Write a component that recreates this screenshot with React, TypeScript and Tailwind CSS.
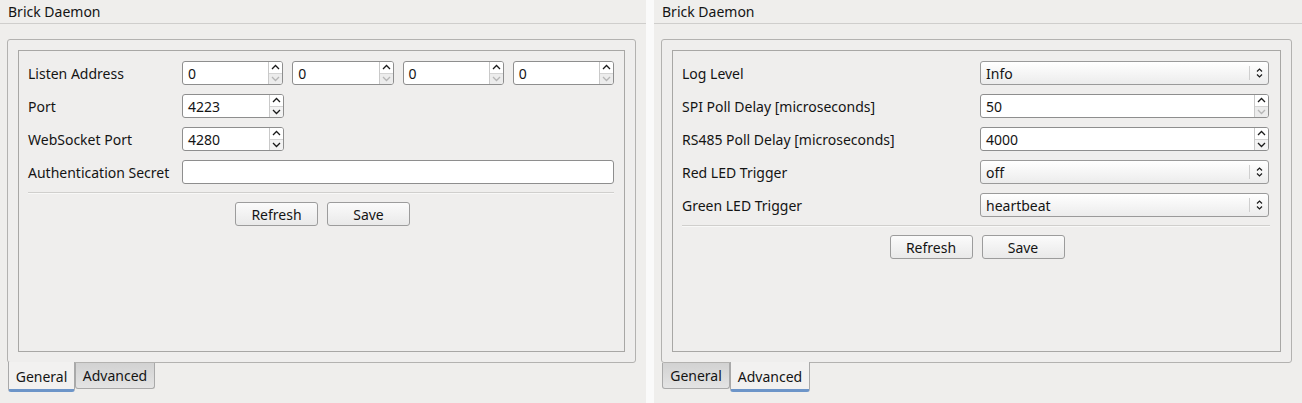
import React from "react";

const Up = ({ dim }: { dim?: boolean }) => (
  <svg width="9" height="6" viewBox="0 0 9 6">
    <path d="M1 5 L4.5 1.5 L8 5" fill="none" stroke={dim ? "#b5b5b5" : "#1a1a1a"} strokeWidth="1.3" />
  </svg>
);

const Down = ({ dim }: { dim?: boolean }) => (
  <svg width="9" height="6" viewBox="0 0 9 6">
    <path d="M1 1 L4.5 4.5 L8 1" fill="none" stroke={dim ? "#b5b5b5" : "#1a1a1a"} strokeWidth="1.3" />
  </svg>
);

function SpinBox({ value, dim, className }: { value: string; dim?: boolean; className: string }) {
  return (
    <div className={"flex h-[24px] rounded-[3px] border border-[#8e8e8e] bg-white overflow-hidden " + className}>
      <div className="flex-1 flex items-center pl-[5px] pt-[2px]">{value}</div>
      <div className="w-[14px] flex flex-col border-l border-[#c9c9c9]">
        <div className="flex-1 flex items-center justify-center border-b border-[#d4d4d4] bg-white">
          <Up />
        </div>
        <div className={"flex-1 flex items-center justify-center " + (dim ? "bg-[#ececec]" : "bg-[#f3f3f3]")}>
          <Down dim={dim} />
        </div>
      </div>
    </div>
  );
}

function Combo({ value }: { value: string }) {
  return (
    <div className="flex h-[24px] w-[289px] rounded-[3px] border border-[#9a9a9a] bg-gradient-to-b from-white to-[#ececec]">
      <div className="flex-1 flex items-center pl-[5px] pt-[2px]">{value}</div>
      <div className="w-[19px] my-[4px] border-l border-[#cfcfcf] flex flex-col items-center justify-center gap-[2px]">
        <svg width="7" height="12" viewBox="0 0 7 12">
          <path d="M1 4.5 L3.5 2 L6 4.5 M1 7.5 L3.5 10 L6 7.5" fill="none" stroke="#1a1a1a" strokeWidth="1.2" />
        </svg>
      </div>
    </div>
  );
}

function Button({ label }: { label: string }) {
  return (
    <div className="flex h-[24px] w-[83px] items-center justify-center pt-[2px] rounded-[3px] border border-[#9c9c9c] bg-gradient-to-b from-[#fbfbfb] to-[#e9e9e9]">
      {label}
    </div>
  );
}

function Row({ label, labelW, children }: { label: string; labelW: string; children: React.ReactNode }) {
  return (
    <div className="flex h-[24px] items-center">
      <div className={"pt-[2px] " + labelW}>{label}</div>
      {children}
    </div>
  );
}

function Tabs({ active }: { active: number }) {
  const names = ["General", "Advanced"];
  return (
    <div className="flex ml-[1px] -mt-[1px] items-start">
      {names.map((n, i) =>
        i === active ? (
          <div
            key={n}
            className={
              "h-[30px] flex items-center justify-center pt-[2px] border-x border-[#a9a9a9] border-b-[3px] border-b-[#6d95c8] rounded-b-[3px] bg-[#f2f1f0] " +
              (i === 0 ? "w-[67px]" : "w-[80px]")
            }
          >
            {n}
          </div>
        ) : (
          <div
            key={n}
            className={
              "h-[26px] mt-[1px] flex items-center justify-center pt-[1px] border border-t-0 border-[#a9a9a9] rounded-b-[3px] bg-gradient-to-b from-[#d2d2d2] to-[#e4e4e4] " +
              (i === 0 ? "w-[68px]" : "w-[80px]")
            }
          >
            {n}
          </div>
        )
      )}
    </div>
  );
}

function Panel({ width, active, children }: { width: string; active: number; children: React.ReactNode }) {
  return (
    <div className={"h-[403px] bg-[#efeeec] flex flex-col " + width}>
      <div className="h-[24px] flex items-center border-b border-[#cfcecc] pl-[8px] pt-[1px]">Brick Daemon</div>
      <div className="ml-[7px] mr-[10px] mt-[15px]">
        <div className="h-[324px] rounded-[3px] border border-[#b3b2b0] bg-[#efeeed] p-[10px]">
          <div className="h-full border border-[#a8a7a5] pt-[10px] pl-[9px] pr-[10px]">{children}</div>
        </div>
        <Tabs active={active} />
      </div>
    </div>
  );
}

function Separator() {
  return <div className="h-[2px] border-t border-[#d0cfcd] bg-[#f8f8f7]" />;
}

export default function App() {
  return (
    <div className="flex w-[1302px] h-[403px] bg-[#fafafa] font-['Noto_Sans',sans-serif] text-[14px] text-[#141414] leading-none">
      <Panel width="w-[646px]" active={0}>
        <div className="flex flex-col gap-[9px]">
          <Row label="Listen Address" labelW="w-[154px]">
            <div className="flex flex-1 gap-[9px]">
              <SpinBox value="0" dim className="flex-1" />
              <SpinBox value="0" dim className="flex-1" />
              <SpinBox value="0" dim className="flex-1" />
              <SpinBox value="0" dim className="flex-1" />
            </div>
          </Row>
          <Row label="Port" labelW="w-[154px]">
            <SpinBox value="4223" className="w-[102px]" />
          </Row>
          <Row label="WebSocket Port" labelW="w-[154px]">
            <SpinBox value="4280" className="w-[102px]" />
          </Row>
          <Row label="Authentication Secret" labelW="w-[154px]">
            <div className="flex-1 h-[24px] rounded-[3px] border border-[#8e8e8e] bg-white" />
          </Row>
        </div>
        <div className="mt-[8px]">
          <Separator />
        </div>
        <div className="mt-[8px] flex justify-center gap-[9px] pl-[3px]">
          <Button label="Refresh" />
          <Button label="Save" />
        </div>
      </Panel>
      <div className="w-[8px]" />
      <Panel width="w-[648px]" active={1}>
        <div className="flex flex-col gap-[9px]">
          <Row label="Log Level" labelW="w-[298px]">
            <Combo value="Info" />
          </Row>
          <Row label="SPI Poll Delay [microseconds]" labelW="w-[298px]">
            <SpinBox value="50" dim className="w-[289px]" />
          </Row>
          <Row label="RS485 Poll Delay [microseconds]" labelW="w-[298px]">
            <SpinBox value="4000" className="w-[289px]" />
          </Row>
          <Row label="Red LED Trigger" labelW="w-[298px]">
            <Combo value="off" />
          </Row>
          <Row label="Green LED Trigger" labelW="w-[298px]">
            <Combo value="heartbeat" />
          </Row>
        </div>
        <div className="mt-[8px]">
          <Separator />
        </div>
        <div className="mt-[8px] flex justify-center gap-[9px] pl-[2px]">
          <Button label="Refresh" />
          <Button label="Save" />
        </div>
      </Panel>
    </div>
  );
}
